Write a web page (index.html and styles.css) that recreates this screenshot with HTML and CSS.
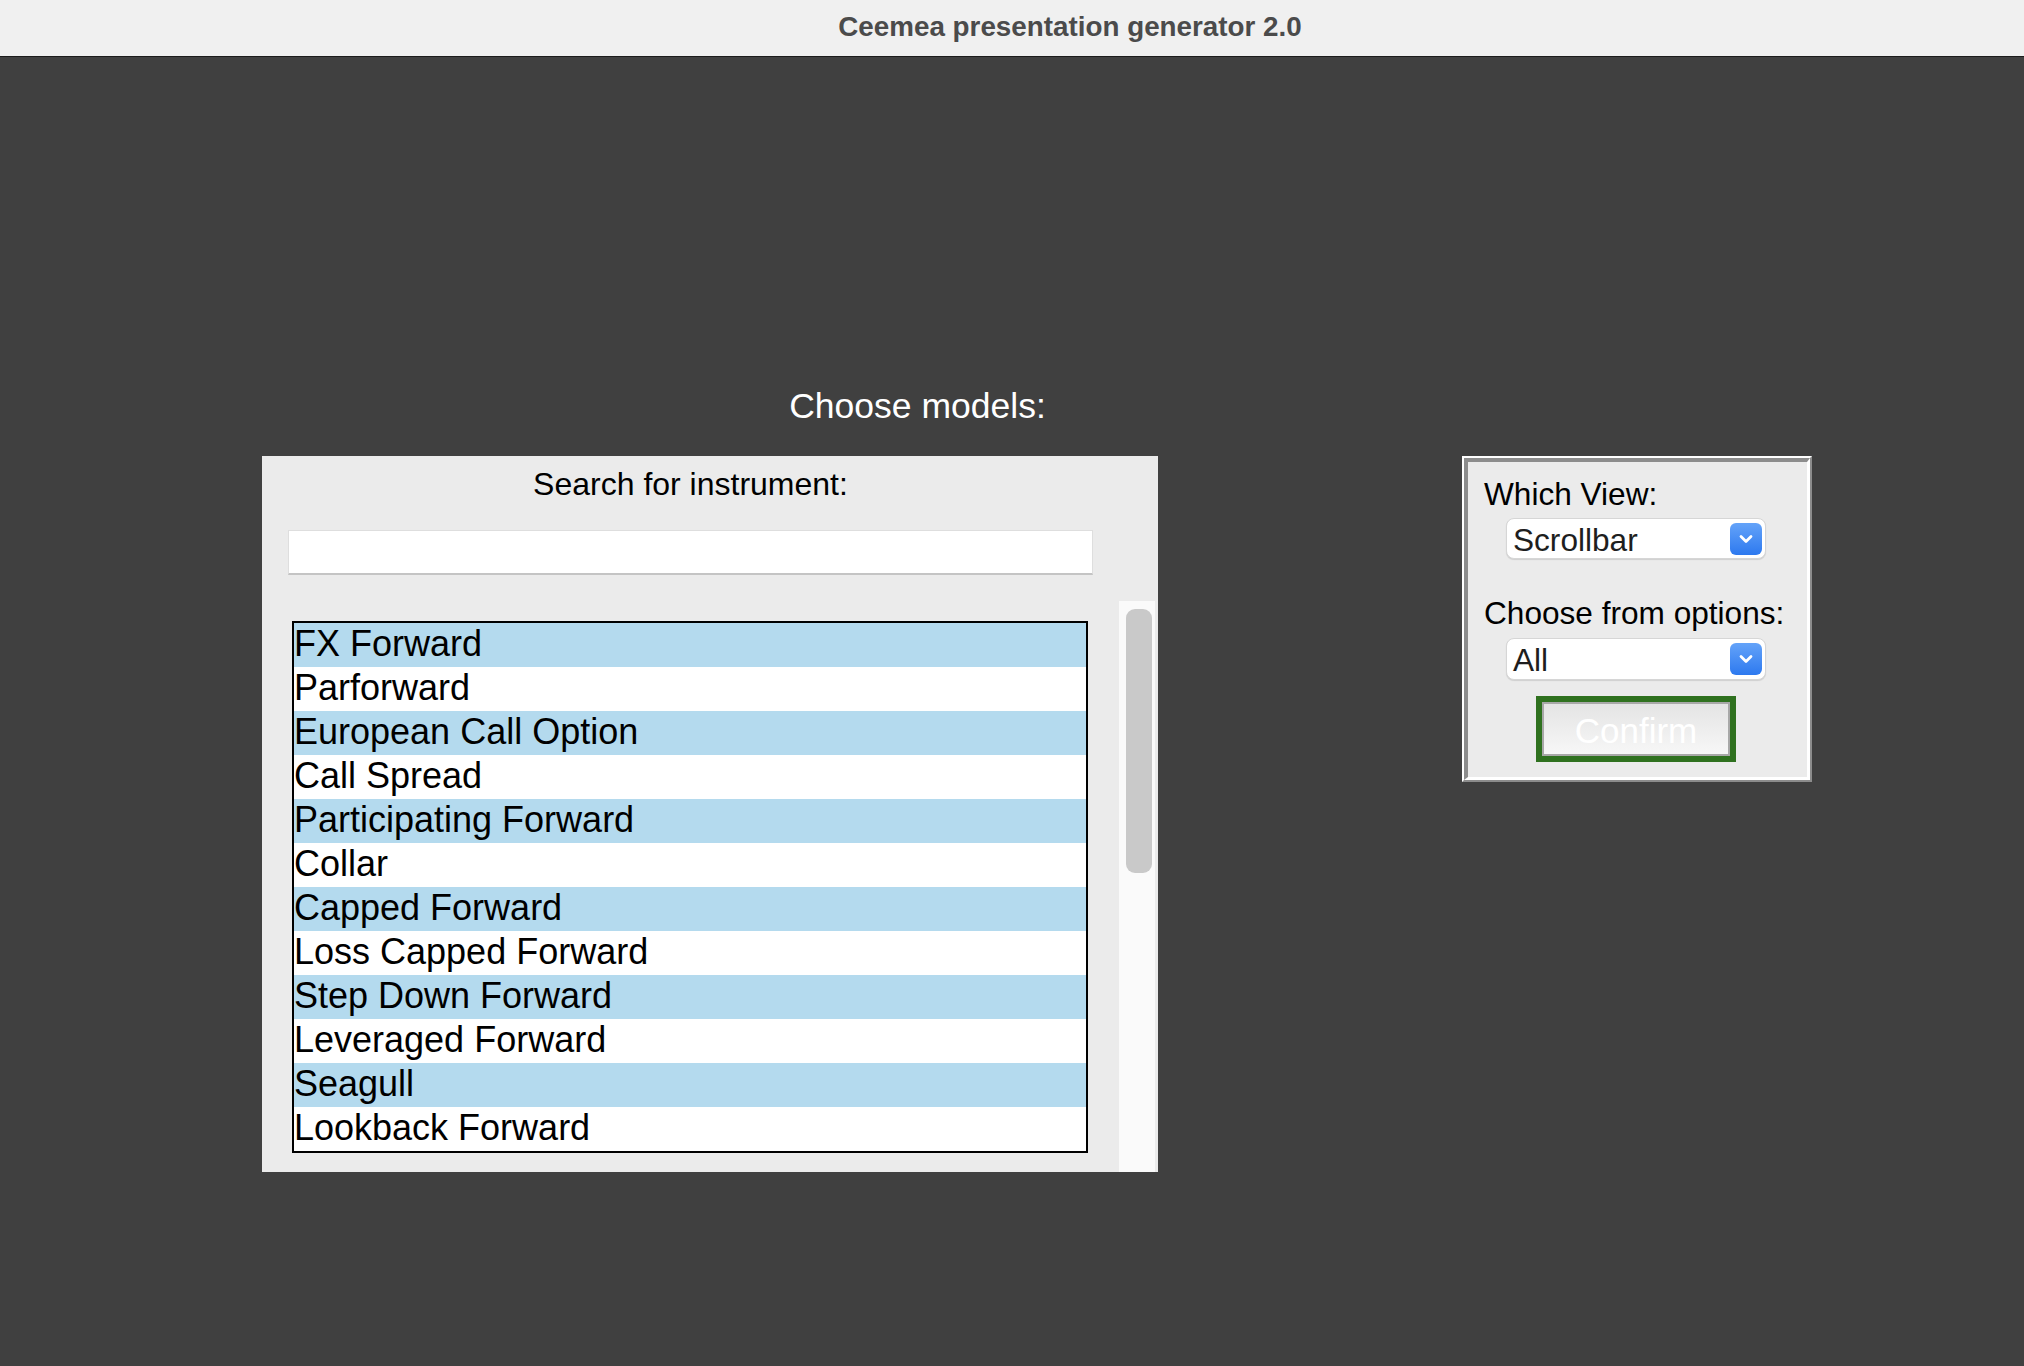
FILE: index.html
```html
<!DOCTYPE html>
<html lang="en">
<head>
<meta charset="utf-8">
<title>Ceemea presentation generator 2.0</title>
<link rel="stylesheet" href="styles.css">
</head>
<body>
<header class="titlebar">Ceemea presentation generator 2.0</header>
<main class="main">
  <h1 class="heading">Choose models:</h1>
  <div class="row">
    <section class="models">
      <div class="search-head">
        <div class="search-label">Search for instrument:</div>
        <div class="search-input"></div>
      </div>
      <div class="scroll-area">
        <div class="list-wrap">
          <ul class="listbox">
            <li class="item alt">FX Forward</li>
            <li class="item">Parforward</li>
            <li class="item alt">European Call Option</li>
            <li class="item">Call Spread</li>
            <li class="item alt">Participating Forward</li>
            <li class="item">Collar</li>
            <li class="item alt">Capped Forward</li>
            <li class="item">Loss Capped Forward</li>
            <li class="item alt">Step Down Forward</li>
            <li class="item">Leveraged Forward</li>
            <li class="item alt">Seagull</li>
            <li class="item">Lookback Forward</li>
          </ul>
        </div>
        <div class="track"><div class="thumb"></div></div>
      </div>
    </section>
    <section class="opts">
      <div class="opts-inner">
        <div class="opt-label">Which View:</div>
        <div class="select">
          <span class="select-text">Scrollbar</span>
          <span class="select-btn"><svg width="32" height="32" viewBox="0 0 32 32"><path d="M11 13.5 L16 18.5 L21 13.5" fill="none" stroke="#fff" stroke-width="2.8" stroke-linecap="round" stroke-linejoin="round"/></svg></span>
        </div>
        <div class="opt-label second">Choose from options:</div>
        <div class="select tall">
          <span class="select-text">All</span>
          <span class="select-btn"><svg width="32" height="32" viewBox="0 0 32 32"><path d="M11 13.5 L16 18.5 L21 13.5" fill="none" stroke="#fff" stroke-width="2.8" stroke-linecap="round" stroke-linejoin="round"/></svg></span>
        </div>
        <div class="confirm"><div class="confirm-face">Confirm</div></div>
      </div>
    </section>
  </div>
</main>
</body>
</html>
```
FILE: styles.css
```css
html, body {
  margin: 0;
  padding: 0;
}
body {
  background: #404040;
  font-family: "Liberation Sans", Arial, Helvetica, sans-serif;
  width: 2024px;
  height: 1366px;
  overflow: hidden;
}
.titlebar {
  box-sizing: border-box;
  height: 57px;
  line-height: 54px;
  padding-left: 116px;
  text-align: center;
  background: #f0f0f0;
  border-bottom: 1px solid #1c1c1c;
  color: #4b4b4b;
  font-weight: 700;
  font-size: 27.8px;
}
.main {
  padding-left: 262px;
}
.heading {
  margin: 0;
  padding-top: 329px;
  width: 1311px;
  text-align: center;
  font-weight: 400;
  font-size: 35.5px;
  line-height: 40px;
  color: #ffffff;
}
.row {
  display: flex;
  align-items: flex-start;
  gap: 304px;
  margin-top: 30px;
}
.models {
  width: 896px;
  height: 716px;
  background: #ebebeb;
  overflow: hidden;
}
.search-head {
  width: 857px;
  padding-top: 10px;
}
.search-label {
  text-align: center;
  font-size: 32px;
  line-height: 36px;
  color: #000;
}
.search-input {
  box-sizing: border-box;
  width: 805px;
  height: 45px;
  margin: 28px 0 0 26px;
  background: #fff;
  border: 1px solid #dedede;
  border-bottom: 2px solid #c4c4c4;
}
.scroll-area {
  display: flex;
  margin-top: 26px;
  height: 571px;
}
.list-wrap {
  width: 857px;
  box-sizing: border-box;
  padding: 20px 0 0 30px;
}
.listbox {
  list-style: none;
  margin: 0;
  padding: 0;
  width: 796px;
  box-sizing: border-box;
  border: 2px solid #000;
  background: #fff;
}
.item {
  height: 44px;
  line-height: 42px;
  font-size: 36px;
  color: #000;
  white-space: nowrap;
  overflow: hidden;
}
.item.alt {
  background: #b4daee;
}
.track {
  width: 36px;
  background: #fafafa;
  padding-top: 8px;
  box-sizing: border-box;
}
.thumb {
  width: 26px;
  height: 264px;
  margin-left: 7px;
  border-radius: 9px;
  background: #c9c9c9;
}
.opts {
  width: 350px;
  box-sizing: border-box;
  border: 2px solid;
  border-color: #ffffff #8c8c8c #8c8c8c #ffffff;
}
.opts-inner {
  border-style: solid;
  border-width: 4px 3px 3px 4px;
  border-color: #8c8c8c #ffffff #ffffff #8c8c8c;
  background: #ebebeb;
  padding: 13px 0 15px 0;
}
.opt-label {
  padding-left: 16px;
  font-size: 31.6px;
  line-height: 38px;
  color: #000;
  white-space: nowrap;
}
.opt-label.second {
  margin-top: 35px;
}
.select {
  display: flex;
  align-items: center;
  justify-content: space-between;
  box-sizing: border-box;
  width: 260px;
  height: 41px;
  margin: 5px 0 0 38px;
  padding: 0 3px 0 6px;
  background: #fff;
  border: 1px solid #d6d6d6;
  border-radius: 8px;
  box-shadow: 0 1px 1px rgba(0, 0, 0, 0.12);
}
.select.tall {
  height: 42px;
  margin-top: 6px;
}
.select-text {
  font-size: 31.6px;
  padding-top: 3px;
  color: #1e1e1e;
}
.select-btn {
  display: flex;
  width: 32px;
  height: 32px;
  border-radius: 6px;
  background: linear-gradient(#64a3f9, #2d79ef);
}
.confirm {
  box-sizing: border-box;
  width: 200px;
  height: 66px;
  margin: 16px 0 0 68px;
  border: 6px solid #2f711f;
}
.confirm-face {
  box-sizing: border-box;
  height: 100%;
  border: 2px solid #a8a8a8;
  background: linear-gradient(#e4e4e4, #f7f7f7);
  color: #ffffff;
  font-size: 35px;
  line-height: 54px;
  text-align: center;
  overflow: hidden;
}
```
